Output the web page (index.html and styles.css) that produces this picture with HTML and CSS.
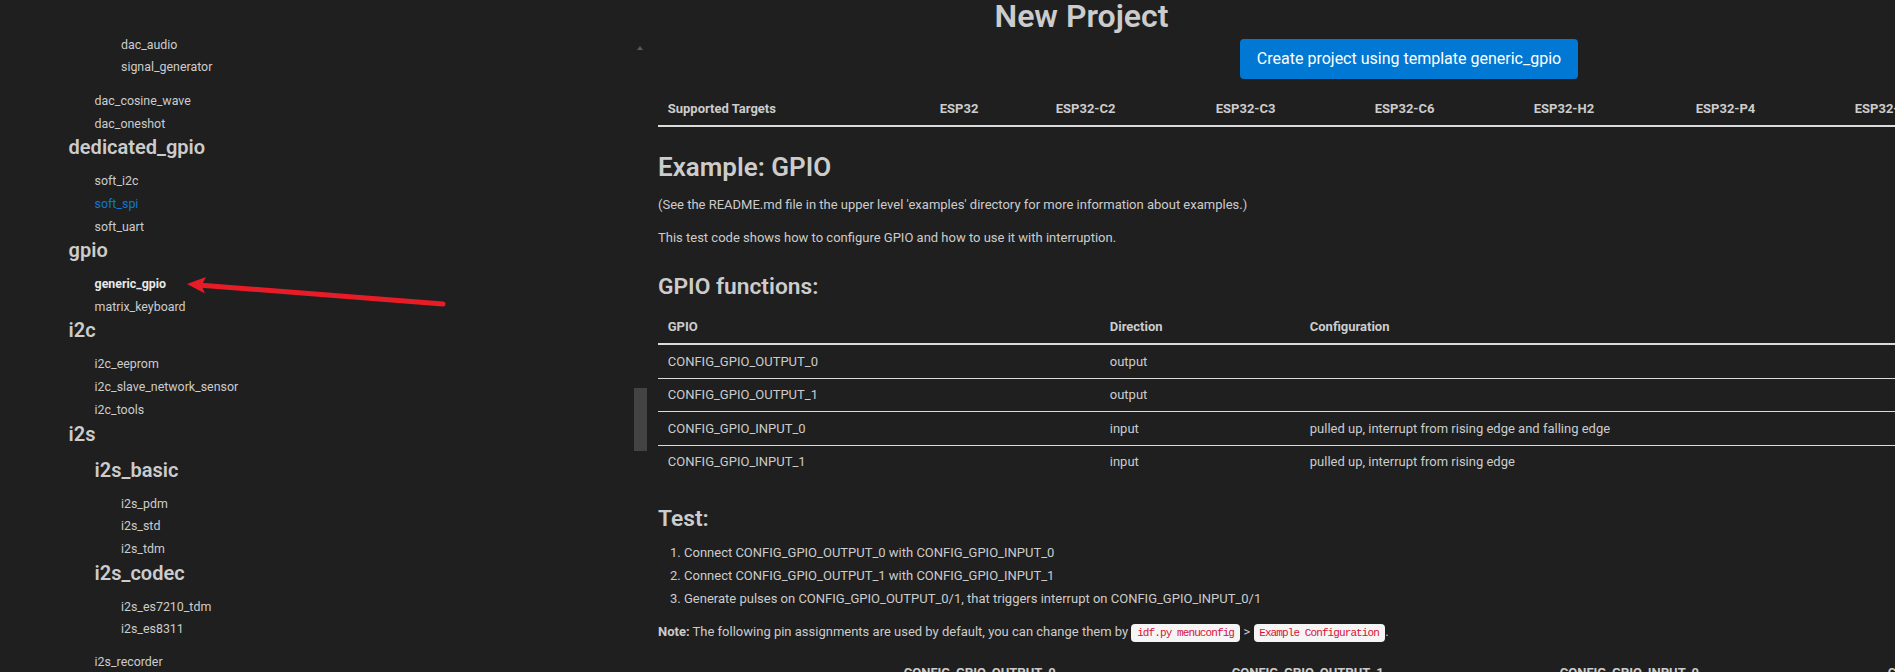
FILE: index.html
```html
<!DOCTYPE html>
<html lang="en">
<head>
<meta charset="utf-8">
<title>New Project</title>
<link rel="stylesheet" href="styles.css">
</head>
<body>
<div class="page">
  <h1 class="title">New Project</h1>
  <div class="columns">
    <nav class="sidebar">
      <div class="tree">
        <ul class="l3 group-end first-end">
          <li>dac_audio</li>
          <li>signal_generator</li>
        </ul>
        <ul class="l2">
          <li>dac_cosine_wave</li>
          <li>dac_oneshot</li>
        </ul>
        <section class="cat">
          <h3>dedicated_gpio</h3>
          <ul class="l2">
            <li>soft_i2c</li>
            <li class="link">soft_spi</li>
            <li>soft_uart</li>
          </ul>
        </section>
        <section class="cat">
          <h3>gpio</h3>
          <ul class="l2">
            <li class="active">generic_gpio</li>
            <li>matrix_keyboard</li>
          </ul>
        </section>
        <section class="cat">
          <h3>i2c</h3>
          <ul class="l2">
            <li>i2c_eeprom</li>
            <li>i2c_slave_network_sensor</li>
            <li>i2c_tools</li>
          </ul>
        </section>
        <section class="cat">
          <h3>i2s</h3>
          <div class="subgroups group-end">
            <section class="sub">
              <h4>i2s_basic</h4>
              <ul class="l3">
                <li>i2s_pdm</li>
                <li>i2s_std</li>
                <li>i2s_tdm</li>
              </ul>
            </section>
            <section class="sub">
              <h4>i2s_codec</h4>
              <ul class="l3">
                <li>i2s_es7210_tdm</li>
                <li>i2s_es8311</li>
              </ul>
            </section>
          </div>
          <ul class="l2">
            <li>i2s_recorder</li>
          </ul>
        </section>
      </div>
      <div class="scrollbar">
        <span class="scroll-up"></span>
        <span class="scroll-thumb"></span>
      </div>
    </nav>

    <main class="main">
      <div class="actions">
        <button class="btn" type="button">Create project using template generic_gpio</button>
      </div>

      <table class="tbl targets">
        <colgroup>
          <col class="w272"><col class="w116"><col class="w160"><col class="w159"><col class="w159"><col class="w162"><col class="w159"><col class="w159"><col class="w159">
        </colgroup>
        <thead>
          <tr>
            <th>Supported Targets</th><th>ESP32</th><th>ESP32-C2</th><th>ESP32-C3</th><th>ESP32-C6</th><th>ESP32-H2</th><th>ESP32-P4</th><th>ESP32-S2</th><th>ESP32-S3</th>
          </tr>
        </thead>
      </table>

      <article class="content">
        <h1 class="h-example">Example: GPIO</h1>
        <p class="p-see">(See the README.md file in the upper level 'examples' directory for more information about examples.)</p>
        <p class="p-intro">This test code shows how to configure GPIO and how to use it with interruption.</p>

        <h2 class="h-func">GPIO functions:</h2>
        <table class="tbl gpio">
          <colgroup><col class="w442"><col class="w200"><col></colgroup>
          <thead>
            <tr><th>GPIO</th><th>Direction</th><th>Configuration</th></tr>
          </thead>
          <tbody>
            <tr><td>CONFIG_GPIO_OUTPUT_0</td><td>output</td><td></td></tr>
            <tr><td>CONFIG_GPIO_OUTPUT_1</td><td>output</td><td></td></tr>
            <tr><td>CONFIG_GPIO_INPUT_0</td><td>input</td><td>pulled up, interrupt from rising edge and falling edge</td></tr>
            <tr><td>CONFIG_GPIO_INPUT_1</td><td>input</td><td>pulled up, interrupt from rising edge</td></tr>
          </tbody>
        </table>

        <h2 class="h-test">Test:</h2>
        <ol class="steps">
          <li>Connect CONFIG_GPIO_OUTPUT_0 with CONFIG_GPIO_INPUT_0</li>
          <li>Connect CONFIG_GPIO_OUTPUT_1 with CONFIG_GPIO_INPUT_1</li>
          <li>Generate pulses on CONFIG_GPIO_OUTPUT_0/1, that triggers interrupt on CONFIG_GPIO_INPUT_0/1</li>
        </ol>

        <p class="p-note"><strong>Note:</strong> The following pin assignments are used by default, you can change them by <code>idf.py menuconfig</code> &gt; <code>Example Configuration</code>.</p>

        <table class="tbl pins">
          <colgroup><col class="w236"><col class="w328"><col class="w328"><col class="w328"><col></colgroup>
          <thead>
            <tr><th></th><th>CONFIG_GPIO_OUTPUT_0</th><th>CONFIG_GPIO_OUTPUT_1</th><th>CONFIG_GPIO_INPUT_0</th><th>CONFIG_GPIO_INPUT_1</th></tr>
          </thead>
        </table>
      </article>
    </main>
  </div>

  <svg class="annot" width="460" height="320" viewBox="0 0 460 320" aria-hidden="true">
    <line x1="443" y1="304" x2="201" y2="285.2" stroke="#e81c27" stroke-width="5" stroke-linecap="round"/>
    <polygon points="187,284 206,277 201.5,285.4 205,293.5" fill="#e81c27"/>
  </svg>
</div>
</body>
</html>
```
FILE: styles.css
```css
html, body {
  margin: 0;
  height: 672px;
  overflow: hidden;
  background: #1f1f1f;
}

body {
  font-family: Roboto, "Liberation Sans", sans-serif;
  font-size: 13px;
  color: #cccccc;
}

.page {
  position: relative;
  width: 2163px;
}

.title {
  margin: 0;
  height: 32px;
  font-size: 32px;
  line-height: 32px;
  font-weight: 600;
  text-align: center;
  color: #cccccc;
}

.columns {
  display: flex;
}

/* ---------- sidebar ---------- */
.sidebar {
  position: relative;
  flex: none;
  width: 648px;
  height: 640px;
  box-sizing: border-box;
  padding-top: 2.55px;
  overflow: hidden;
}

.tree {
  padding-left: 68.6px;
  font-size: 12.4px;
}

.tree ul {
  list-style: none;
  margin: 0;
  padding: 0;
}

.tree li {
  line-height: 19.5px;
  white-space: nowrap;
}

.tree li + li {
  margin-top: 3.3px;
}

.tree .l2 {
  margin-left: 26px;
}

.tree .l3 {
  margin-left: 52.4px;
}

.tree .group-end {
  margin-bottom: 12.7px;
}

.tree .first-end {
  margin-bottom: 13.9px;
}

.tree h3,
.tree h4 {
  margin: 2px 0 12px;
  font-size: 20px;
  line-height: 24px;
  font-weight: 600;
  color: #cccccc;
  white-space: nowrap;
}

.tree h4 {
  margin-left: 26px;
}

.tree .sub .l3 {
  margin-left: 52.4px;
}

.tree .link {
  color: #0f78d0;
}

.tree .active {
  font-weight: 700;
  color: #e8e8e8;
}

.scrollbar {
  position: absolute;
  top: 0;
  right: 0;
  width: 14px;
  height: 100%;
}

.scroll-up {
  position: absolute;
  left: 3px;
  top: 13.7px;
  width: 0;
  height: 0;
  border-left: 3.5px solid transparent;
  border-right: 3.5px solid transparent;
  border-bottom: 4px solid #5a5a5a;
}

.scroll-thumb {
  position: absolute;
  left: 0;
  top: 356px;
  width: 13px;
  height: 63px;
  background: #434343;
}

/* ---------- main ---------- */
.main {
  flex: none;
  width: 1515px;
  box-sizing: border-box;
  padding: 0 3px 0 10px;
}

.actions {
  display: flex;
  justify-content: center;
  padding-top: 7px;
}

.btn {
  height: 40px;
  padding: 0 16px;
  border: 1px solid transparent;
  border-radius: 4px;
  background: #0078d4;
  color: #ffffff;
  font-family: Roboto, "Liberation Sans", sans-serif;
  font-size: 16px;
  line-height: 38px;
  white-space: nowrap;
}

.tbl {
  table-layout: fixed;
  border-collapse: separate;
  border-spacing: 0;
  margin: 0;
  color: #cccccc;
}

.tbl th,
.tbl td {
  padding: 6.5px 9.75px;
  line-height: 19.5px;
  text-align: left;
  vertical-align: top;
  white-space: nowrap;
  overflow: hidden;
}

.tbl th {
  font-weight: 700;
  border-bottom: 2px solid #dbdbdb;
}

.tbl td {
  border-bottom: 1px solid #dbdbdb;
}

.tbl tbody tr:last-child td {
  border-bottom: 0;
}

.targets {
  width: 1505px;
  margin-top: 13px;
}

.gpio,
.pins {
  width: 1502px;
}

.w116 { width: 116px; }
.w159 { width: 159px; }
.w160 { width: 160px; }
.w162 { width: 162px; }
.w200 { width: 200px; }
.w236 { width: 236px; }
.w272 { width: 272px; }
.w328 { width: 328px; }
.w442 { width: 442px; }

.content h1,
.content h2 {
  margin: 0;
  font-weight: 600;
  color: #cccccc;
}

.content h1 {
  font-size: 26px;
  line-height: 32.5px;
}

.content h2 {
  font-size: 22.75px;
  line-height: 25.6px;
}

.content p {
  margin: 0;
  line-height: 19.5px;
}

.content .h-example { margin-top: 24.4px; }
.content .p-see { margin-top: 11.6px; }
.content .p-intro { margin-top: 13.2px; }
.content .h-func { margin-top: 27px; }
.gpio { margin-top: 11.2px; }
.content .h-test { margin-top: 27.3px; }

.steps {
  margin: 12.15px 0 0 26px;
  padding: 0;
}

.steps li {
  line-height: 19.5px;
}

.steps li + li {
  margin-top: 3.25px;
}

.content .p-note { margin-top: 13.4px; }

.content strong {
  font-weight: 700;
}

.content code {
  background: #f5f5f5;
  color: #da1039;
  font-family: "Liberation Mono", monospace;
  font-size: 11px;
  letter-spacing: -0.9px;
  padding: 2.75px 6.2px 2.75px 5.7px;
  border-radius: 4px;
}

.pins {
  margin-top: 13.3px;
}

/* ---------- annotation ---------- */
.annot {
  position: absolute;
  left: 0;
  top: 0;
  pointer-events: none;
}
```
